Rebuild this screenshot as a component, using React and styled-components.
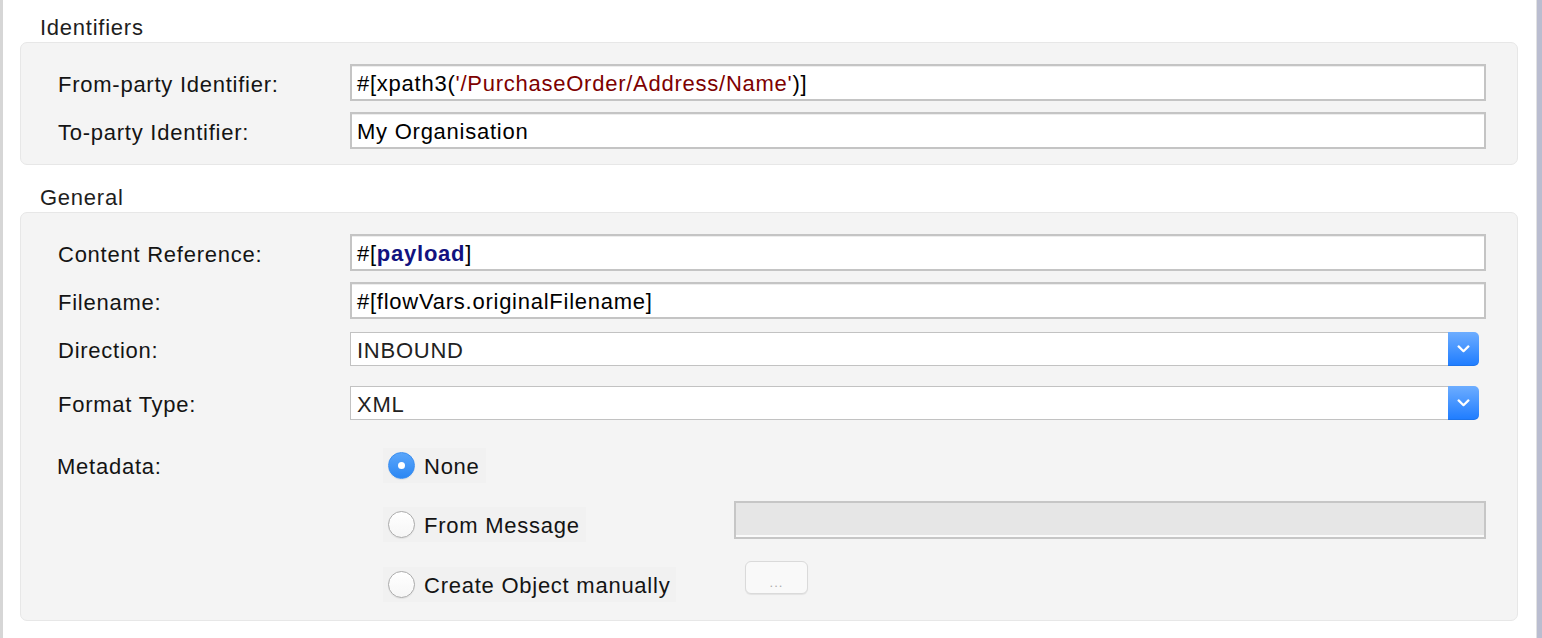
import styled, { createGlobalStyle } from "styled-components";

const GlobalStyle = createGlobalStyle`
  html, body {
    margin: 0;
    background: #fff;
  }
  body {
    font-family: "Liberation Sans", Arial, sans-serif;
  }
`;

const App = () => {
  return (
    <>
      <GlobalStyle />
      <Page>
        <SectionTitle>Identifiers</SectionTitle>
        <Panel>
          <Row>
            <Label>From-party Identifier:</Label>
            <TextField>
              #[xpath3(<Str>'/PurchaseOrder/Address/Name'</Str>)]
            </TextField>
          </Row>
          <Row $mt={11}>
            <Label>To-party Identifier:</Label>
            <TextField>My Organisation</TextField>
          </Row>
        </Panel>

        <SectionTitle $mt={21}>General</SectionTitle>
        <Panel $pb={19}>
          <Row>
            <Label>Content Reference:</Label>
            <TextField>
              #[<Keyword>payload</Keyword>]
            </TextField>
          </Row>
          <Row $mt={11}>
            <Label>Filename:</Label>
            <TextField>#[flowVars.originalFilename]</TextField>
          </Row>
          <Row $mt={13}>
            <Label>Direction:</Label>
            <Select value="INBOUND" />
          </Row>
          <Row $mt={20}>
            <Label>Format Type:</Label>
            <Select value="XML" />
          </Row>

          <MetaRow>
            <MetaLabel>Metadata:</MetaLabel>
            <OptionList>
              <Option>
                <RadioLabel>
                  <Radio $checked />
                  <RadioText>None</RadioText>
                </RadioLabel>
              </Option>
              <Option $mt={16}>
                <RadioLabel>
                  <Radio />
                  <RadioText>From Message</RadioText>
                </RadioLabel>
                <DisabledField />
              </Option>
              <Option $mt={20}>
                <RadioLabel>
                  <Radio />
                  <RadioText>Create Object manually</RadioText>
                </RadioLabel>
                <EllipsisButton>...</EllipsisButton>
              </Option>
            </OptionList>
          </MetaRow>
        </Panel>
      </Page>
    </>
  );
};

const Select = ({ value }) => (
  <SelectBox>
    <SelectValue>{value}</SelectValue>
    <SelectButton>
      <svg width="13" height="8" viewBox="0 0 13 8">
        <path
          d="M1.6 1.4 L6.5 6.2 L11.4 1.4"
          fill="none"
          stroke="#fff"
          strokeWidth="2.2"
          strokeLinecap="round"
          strokeLinejoin="round"
        />
      </svg>
    </SelectButton>
  </SelectBox>
);

const Page = styled.div`
  box-sizing: border-box;
  min-height: 100vh;
  border-left: 3px solid #d6d6d6;
  border-right: 5px solid #babdd0;
  box-shadow: inset -1px 0 0 #e2e2e2;
  padding: 16px 19px 0 17px;
  font-size: 22px;
  letter-spacing: 0.75px;
  line-height: 26px;
  color: #141414;
`;

const SectionTitle = styled.div`
  padding-left: 20px;
  line-height: 24px;
  margin: ${(p) => p.$mt || 0}px 0 2px;
  color: #1e1e1e;
`;

const Panel = styled.div`
  background: #f4f4f4;
  border: 1px solid #e7e7e7;
  border-radius: 7px;
  padding: 21px 31px ${(p) => p.$pb || 15}px 37px;
`;

const Row = styled.div`
  display: flex;
  align-items: center;
  margin-top: ${(p) => p.$mt || 0}px;
`;

const Label = styled.div`
  flex: none;
  width: 292px;
  padding-top: 4px;
`;

const TextField = styled.div`
  flex: 1;
  box-sizing: border-box;
  height: 37px;
  display: flex;
  align-items: center;
  padding: 3px 5px 0;
  border: 2px solid #c4c4c4;
  background: #fff;
  box-shadow: inset 0 1px 0 #ededed;
  white-space: pre;
  color: #000;
`;

const Str = styled.span`
  color: #7d0000;
`;

const Keyword = styled.span`
  color: #12127f;
  font-weight: bold;
`;

const SelectBox = styled.div`
  flex: 1;
  display: flex;
  height: 34px;
  margin-right: 7px;
`;

const SelectValue = styled.div`
  flex: 1;
  display: flex;
  align-items: center;
  padding: 3px 0 0 6px;
  border: 1px solid #c2c2c2;
  border-right: none;
  background: #fff;
  color: #222;
`;

const SelectButton = styled.div`
  flex: none;
  width: 31px;
  display: flex;
  align-items: center;
  justify-content: center;
  border-radius: 0 5px 5px 0;
  background: linear-gradient(#6dadff, #1e7cff);
  box-shadow: inset 0 -1px 0 rgba(0, 0, 0, 0.08);
`;

const MetaRow = styled.div`
  display: flex;
  align-items: flex-start;
  margin-top: 25px;
`;

const MetaLabel = styled.div`
  flex: none;
  width: 292px;
  margin-left: -1px;
  padding-top: 2px;
  line-height: 40px;
`;

const OptionList = styled.div`
  flex: 1;
  display: flex;
  flex-direction: column;
  padding-left: 34px;
`;

const Option = styled.div`
  display: grid;
  grid-template-columns: 351px 1fr;
  align-items: center;
  height: 40px;
  margin-top: ${(p) => p.$mt || 0}px;
`;

const RadioLabel = styled.div`
  justify-self: start;
  display: inline-flex;
  align-items: center;
  gap: 9px;
  height: 35px;
  padding: 0 6px 0 5px;
  background: #f1f1f1;
`;

const RadioText = styled.span`
  padding-top: 3px;
`;

const Radio = styled.span`
  box-sizing: border-box;
  width: 27px;
  height: 27px;
  border-radius: 50%;
  display: flex;
  align-items: center;
  justify-content: center;
  border: 1px solid ${(p) => (p.$checked ? "#3a8ef0" : "#ababab")};
  background: ${(p) =>
    p.$checked
      ? "linear-gradient(#5aa6fb, #2c87f3)"
      : "linear-gradient(#fff, #f6f6f6)"};
  box-shadow: 0 1px 1px rgba(0, 0, 0, 0.06);

  &::after {
    content: "";
    display: ${(p) => (p.$checked ? "block" : "none")};
    width: 7px;
    height: 7px;
    border-radius: 50%;
    background: #fff;
  }
`;

const DisabledField = styled.div`
  box-sizing: border-box;
  height: 38px;
  margin-bottom: 8px;
  border: 2px solid #c6c6c6;
  background: #e6e6e6;
  box-shadow: inset 0 -2px 0 #fafafa;
`;

const EllipsisButton = styled.button`
  justify-self: start;
  box-sizing: border-box;
  width: 63px;
  height: 33px;
  margin: 0 0 13px 11px;
  padding: 0 0 4px;
  display: flex;
  align-items: flex-end;
  justify-content: center;
  border: 1px solid #dadada;
  border-radius: 6px;
  background: #f9f9f9;
  box-shadow: 0 1px 1px rgba(0, 0, 0, 0.07);
  font-family: "Liberation Sans", Arial, sans-serif;
  font-size: 13px;
  line-height: 13px;
  letter-spacing: 1px;
  color: #ababab;
`;

export default App;
